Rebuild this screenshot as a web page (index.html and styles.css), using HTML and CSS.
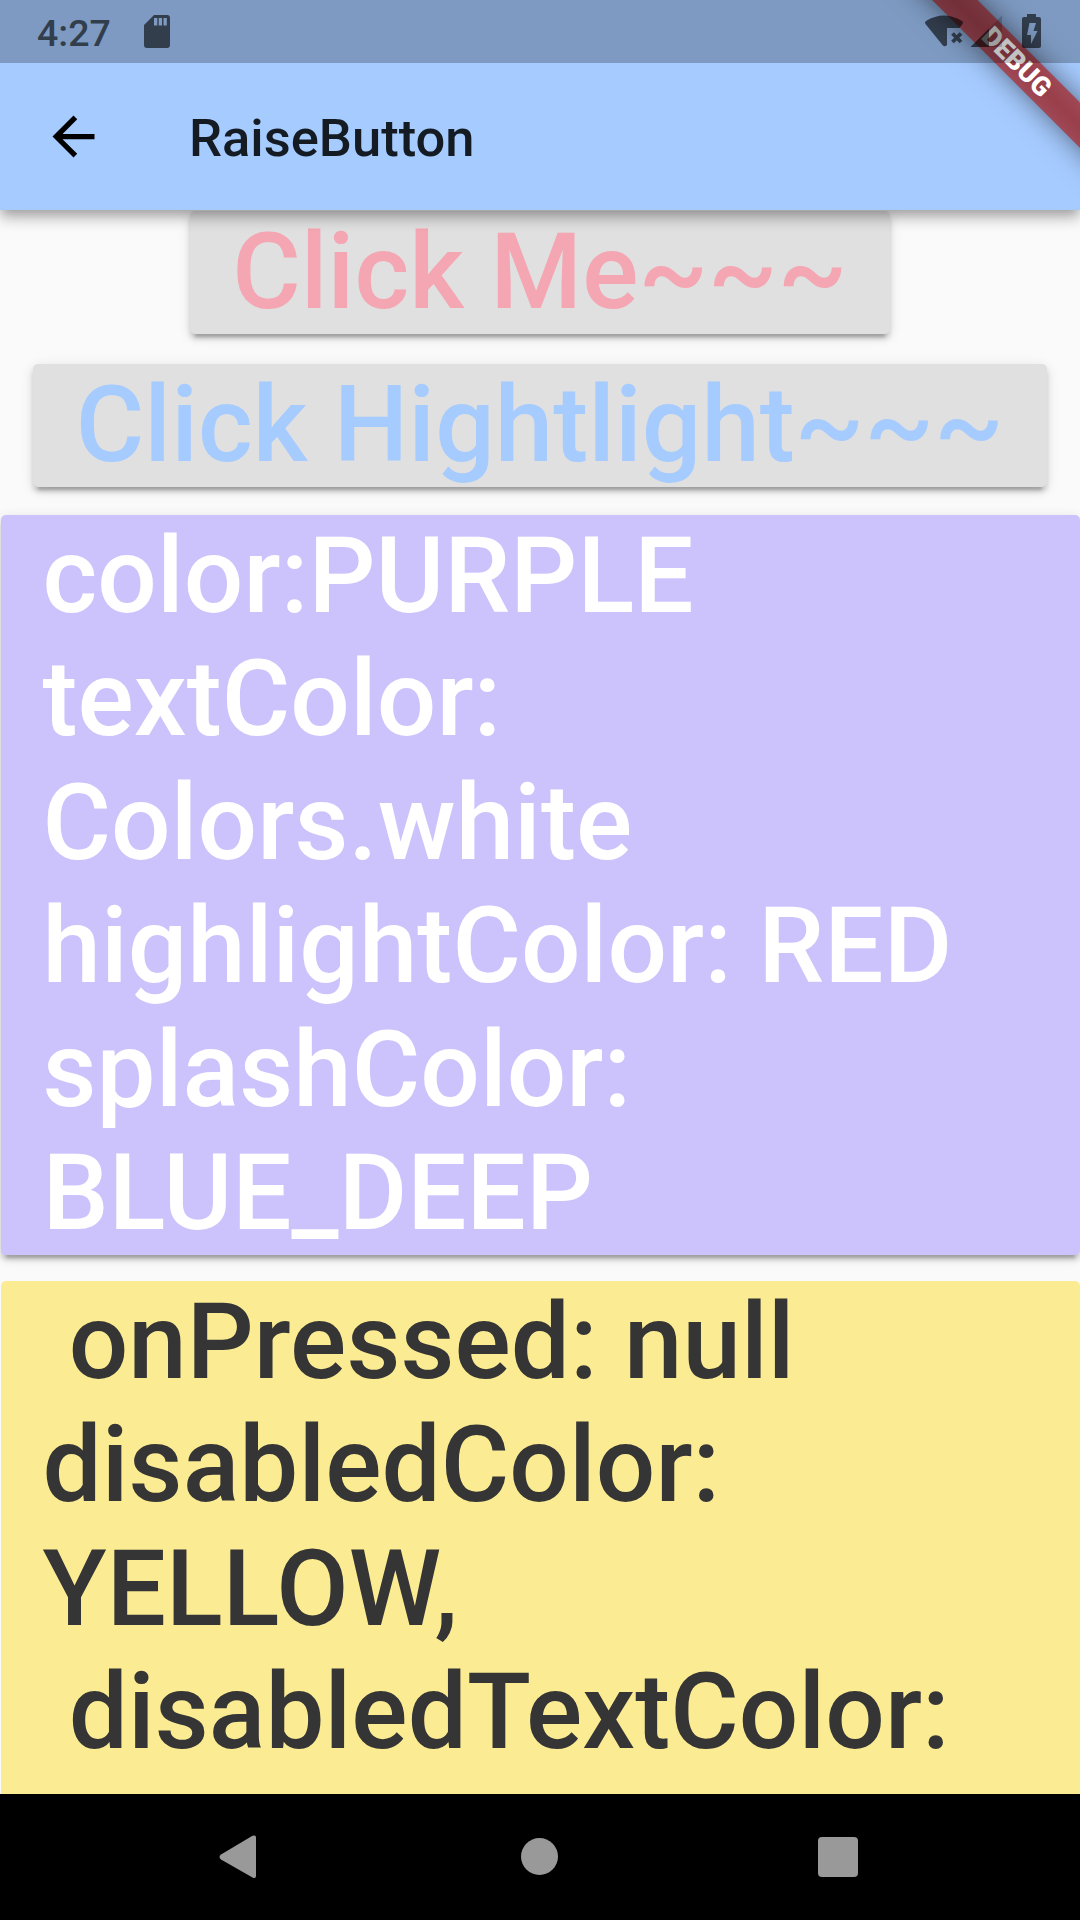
FILE: index.html
```html
<!DOCTYPE html>
<html lang="en">
<head>
<meta charset="utf-8">
<title>RaiseButton</title>
<link rel="stylesheet" href="styles.css">
</head>
<body>
<div class="screen">
  <header class="app-bar">
    <svg class="back" viewBox="0 0 24 24"><path d="M20 11H7.83l5.59-5.59L12 4l-8 8 8 8 1.41-1.41L7.83 13H20v-2z"/></svg>
    <h1 class="title">RaiseButton</h1>
  </header>
  <main class="content">
    <button class="btn pink">Click Me~~~</button>
    <button class="btn blue">Click Hightlight~~~</button>
    <button class="btn purple">color:PURPLE
textColor:
Colors.white
highlightColor: RED
splashColor:
BLUE_DEEP</button>
    <button class="btn yellow" disabled> onPressed: null
disabledColor:
YELLOW,
 disabledTextColor:
</button>
  </main>
  <nav class="nav-bar">
    <svg class="nav-back" viewBox="0 0 38 44"><path d="M2 19.5 33.500 .8Q37 -.5 37 2.500V41Q37 44 33.500 42.500L2 24.500Q-1 22 2 19.500Z"/></svg>
    <span class="nav-home"></span>
    <span class="nav-recent"></span>
  </nav>
  <div class="banner-clip"><div class="banner">DEBUG</div></div>
  <div class="status-bar">
    <span class="time">4:27</span>
    <svg class="sd" viewBox="0 0 26 33"><path fill-rule="evenodd" d="M10 0H23Q26 0 26 3V30Q26 33 23 33H3Q0 33 0 30V10ZM10 3V10.500H13.300V3ZM14.700 3V10.500H18V3ZM19.500 3V10.500H22.800V3Z"/></svg>
    <svg class="signals" viewBox="0 0 118 34">
      <path d="M1.500 9Q0 7.500 2 6Q20 -5 38 6Q40 7.500 38.500 9L35.500 13H23V30Q20.500 32.500 18.500 30Z"/>
      <path class="cross" d="M28.500 18.500 37 27M37 18.500 28.500 27"/>
      <path d="M46.500 32 65 13.500V32Z"/>
      <path class="faint" d="M65 13.500 78 .5V32H65Z"/>
      <path fill-rule="evenodd" d="M103 -1H112V2H115Q117 2 117 4V31Q117 33 115 33H100Q98 33 98 31V4Q98 2 100 2H103ZM105.500 8 103 20H107V29L113.500 16H109.500L112 8Z"/>
    </svg>
  </div>
</div>
</body>
</html>
```
FILE: styles.css
```css
* { box-sizing: border-box; }

body {
  margin: 0;
  font-family: Roboto, sans-serif;
  background: #fafafa;
}

.screen {
  position: relative;
  width: 1080px;
  height: 1920px;
  display: flex;
  flex-direction: column;
  overflow: hidden;
}

.app-bar {
  position: relative;
  z-index: 1;
  flex: none;
  height: 210px;
  padding: 63px 42px 0;
  display: flex;
  align-items: center;
  background: #a6cbff;
  box-shadow: 0 5px 10px -2px rgba(0, 0, 0, .2), 0 10px 13px rgba(0, 0, 0, .14), 0 3px 18px rgba(0, 0, 0, .12);
}

.back {
  width: 63px;
  height: 63px;
}

.title {
  margin: 3px 0 0 84px;
  font-size: 52.5px;
  font-weight: 500;
  color: #151b22;
}

.content {
  flex: 1;
  min-height: 0;
  overflow: hidden;
  padding-top: 1px;
  display: flex;
  flex-direction: column;
  align-items: center;
  gap: 28px;
}

.btn {
  flex: none;
  margin: 0;
  border: 0;
  padding: 0 43px 0 42.5px;
  border-radius: 5px;
  font: 500 105px/123.4px Roboto, sans-serif;
  letter-spacing: .06px;
  text-align: left;
  white-space: pre;
  background: #e0e0e0;
  box-shadow: 0 8px 3px -5px rgba(0, 0, 0, .2), 0 5px 5px rgba(0, 0, 0, .14), 0 3px 13px rgba(0, 0, 0, .12);
}

.pink {
  margin-bottom: 1.2px;
  color: #f4a6b2;
}

.blue { color: #a6cbff; }

.purple {
  width: 1079px;
  padding-left: 42px;
  margin-bottom: -2.4px;
  background: #ccc2fc;
  color: #fff;
}

.yellow {
  width: 1079px;
  padding-left: 42px;
  padding-bottom: 123px;
  background: #fbec94;
  color: #353535;
  box-shadow: none;
}

.nav-bar {
  flex: none;
  height: 126px;
  padding: 0 222px 1px 219px;
  display: flex;
  align-items: center;
  justify-content: space-between;
  background: #000;
}

.nav-back {
  width: 38px;
  height: 44px;
  fill: #999;
}

.nav-home {
  width: 37px;
  height: 37px;
  margin-left: 4px;
  border-radius: 50%;
  background: #999;
}

.nav-recent {
  width: 40px;
  height: 40px;
  border-radius: 4px;
  background: #999;
}

.banner-clip {
  position: absolute;
  z-index: 2;
  top: 0;
  right: 0;
  width: 250px;
  height: 210px;
  overflow: hidden;
}

.banner {
  position: absolute;
  left: 37px;
  top: 46px;
  width: 300px;
  height: 31.5px;
  transform: rotate(45deg);
  font-size: 26.8px;
  font-weight: 900;
  line-height: 32px;
  text-align: center;
  color: #fff;
  background:
    linear-gradient(rgba(183, 28, 28, .63), rgba(183, 28, 28, .63)),
    linear-gradient(rgba(0, 0, 0, .28), rgba(0, 0, 0, .4), rgba(0, 0, 0, .28));
  box-shadow: 0 0 28px rgba(0, 0, 0, .5);
}

.status-bar {
  position: absolute;
  z-index: 3;
  inset: 0 0 auto;
  height: 63px;
  display: flex;
  align-items: flex-start;
  padding: 15px 38px 0 37px;
  background: rgba(0, 0, 0, .24);
  color: #323e4b;
}

.time {
  font-size: 37.5px;
  font-weight: 500;
  line-height: 36px;
}

.sd {
  width: 26px;
  height: 33px;
  margin-left: 33px;
  fill: #323e4b;
}

.signals {
  width: 118px;
  height: 34px;
  margin-left: auto;
  overflow: visible;
  fill: rgba(0, 0, 0, .6);
}

.cross {
  fill: none;
  stroke: rgba(0, 0, 0, .6);
  stroke-width: 3.8;
}

.faint { fill-opacity: .3; }
```
